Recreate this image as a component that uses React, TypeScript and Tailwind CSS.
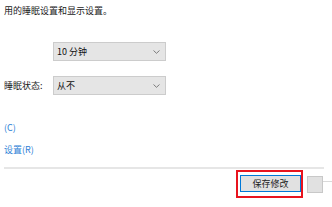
import React from "react";

const font = { fontFamily: '"Noto Sans CJK SC", "Noto Sans", sans-serif' };

function Chevron() {
  return (
    <svg width="7" height="4" viewBox="0 0 7 4" className="mr-[5px]">
      <path d="M0.5 0.5 L3.5 3.3 L6.5 0.5" fill="none" stroke="#707070" strokeWidth="0.9" />
    </svg>
  );
}

function Select({ value }: { value: string }) {
  return (
    <div className="w-[113px] h-[19px] border border-[#cccccc] bg-[#e5e5e5] flex items-center justify-between pl-[3px]">
      <span className="text-[9px] leading-none text-[#111]">{value}</span>
      <Chevron />
    </div>
  );
}

export default function App() {
  return (
    <div style={font} className="w-[332px] h-[207px] bg-white overflow-hidden flex flex-col text-[9px] text-[#1a1a1a]">
      <div className="pl-[4px] pt-[5px] leading-[11px]">用的睡眠设置和显示设置。</div>
      <div className="flex items-center mt-[26px] pl-[53px]">
        <Select value="10 分钟" />
      </div>
      <div className="flex items-center mt-[15px] pl-[4px]">
        <span className="w-[49px] leading-none">睡眠状态:</span>
        <Select value="从不" />
      </div>
      <div className="pl-[4px] mt-[27px] leading-[11px] text-[#2e7fd6]">(C)</div>
      <div className="pl-[4px] mt-[11px] leading-[11px] text-[#2e7fd6]">设置(R)</div>
      <div className="ml-[4px] w-[320px] h-[2px] bg-[#e6e6e6] mt-[12px]" />
      <div className="flex items-start mt-[1px] pl-[236px]">
        <div className="w-[68px] h-[28px] border-2 border-[#e8141e] pl-[2px] pt-[3px]">
          <div className="w-[61px] h-[17px] border border-[#0078d7] bg-[#e1e1e1] flex items-center justify-center text-[9px] leading-none text-[#222]">
            保存修改
          </div>
        </div>
        <div className="ml-[4px] mt-[6px] w-[16px] h-[17px] border border-[#c8c8c8] bg-[#e1e1e1]" />
        <div className="mt-[11px] w-[9px] h-px bg-[#dadada]" />
      </div>
    </div>
  );
}
